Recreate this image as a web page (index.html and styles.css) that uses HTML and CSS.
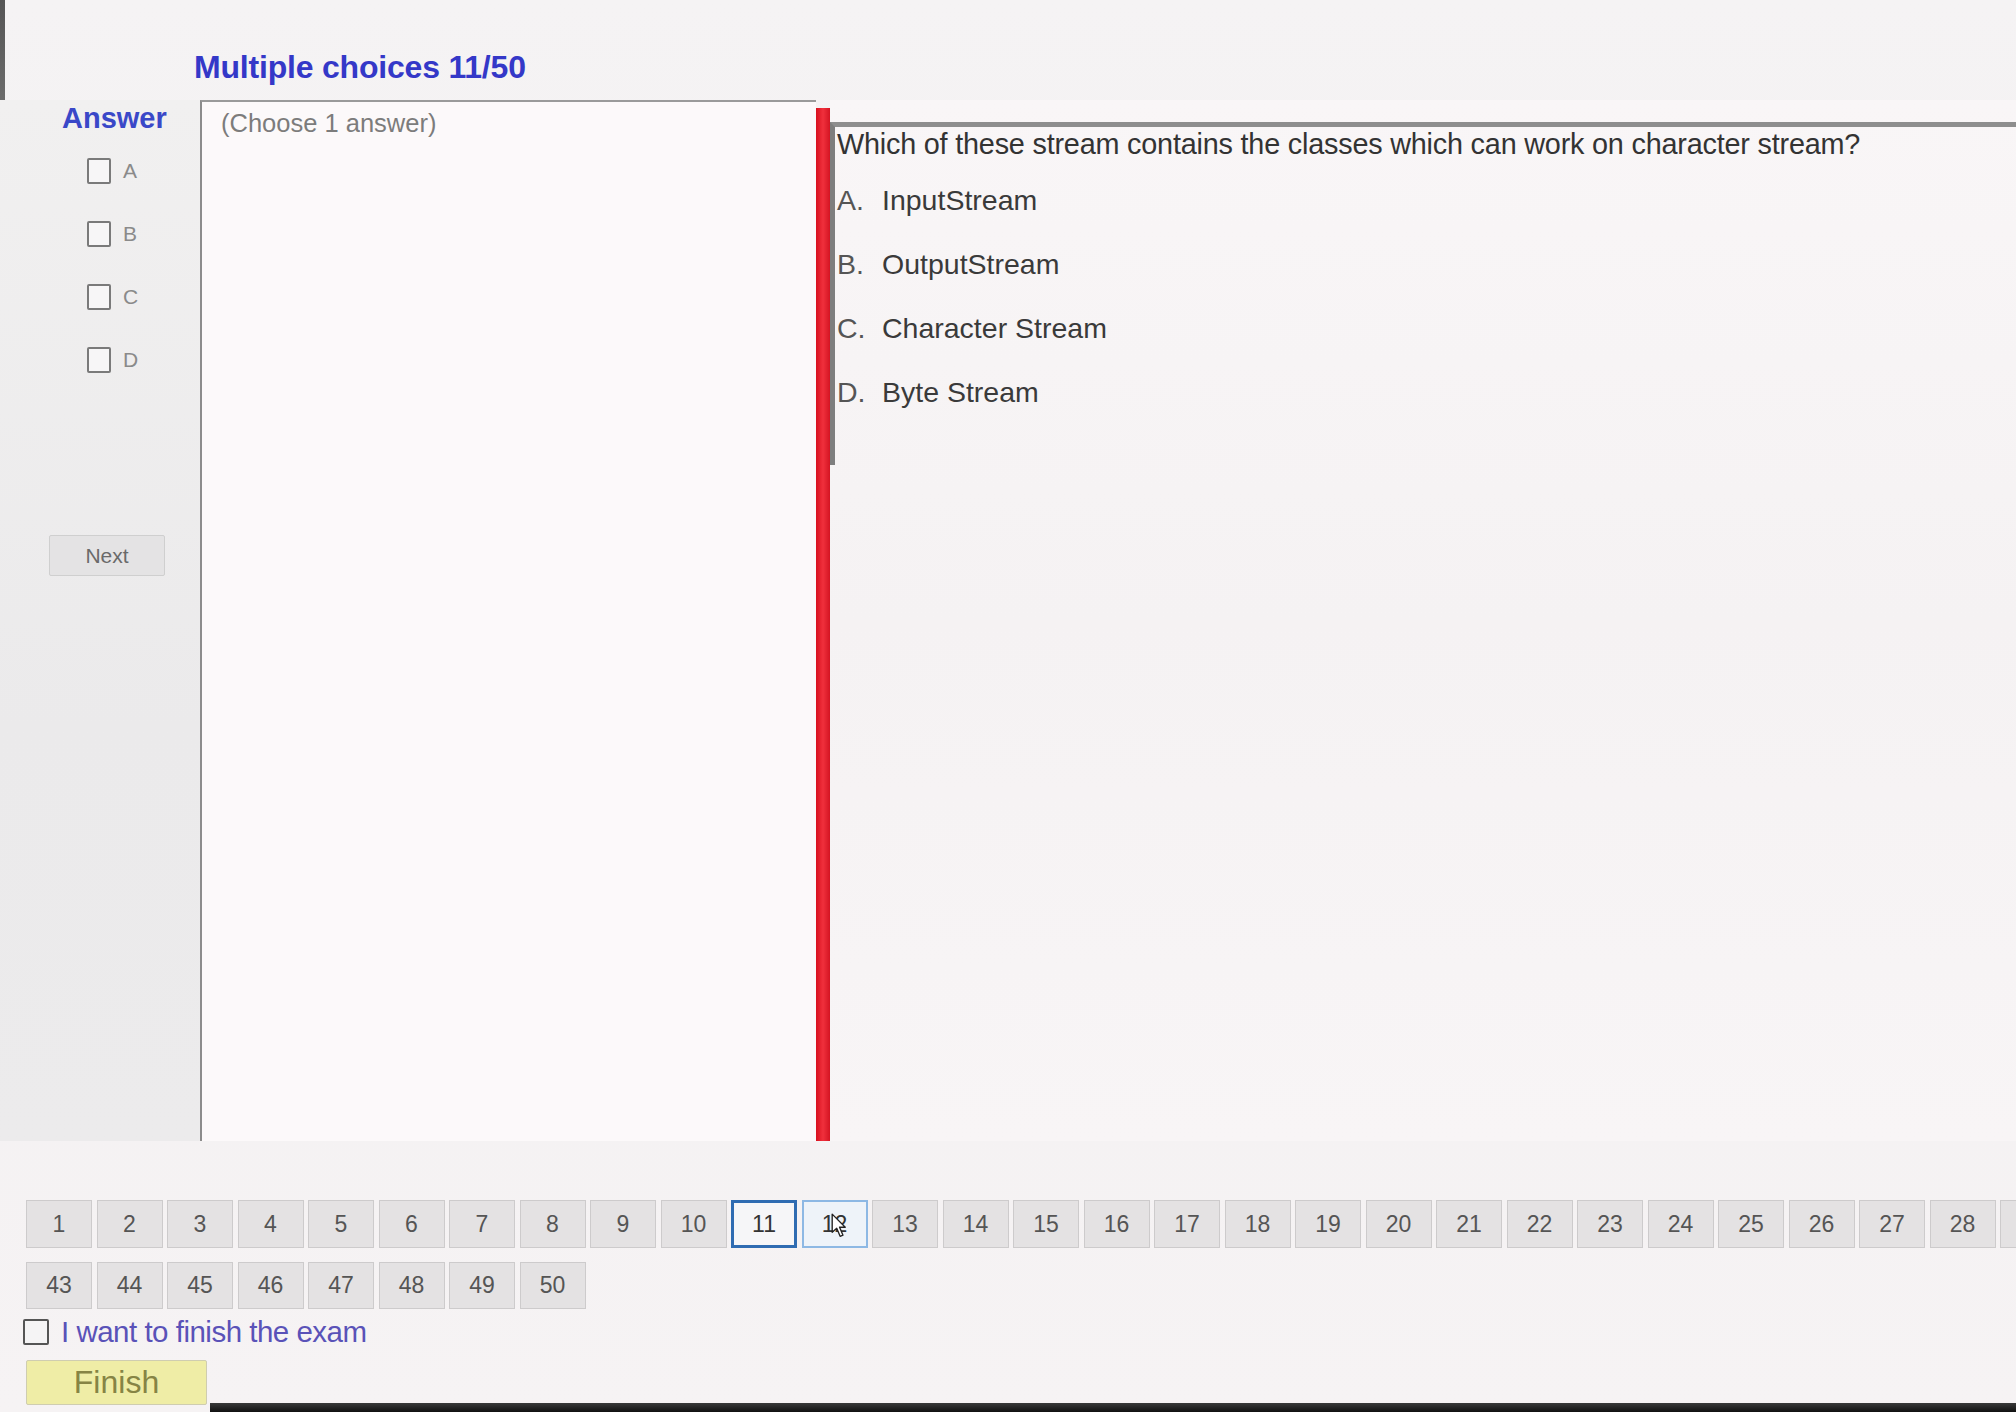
FILE: index.html
```html
<!DOCTYPE html>
<html lang="en">
<head>
<meta charset="utf-8">
<title>Multiple choices 11/50</title>
<link rel="stylesheet" href="styles.css">
</head>
<body>
<div class="screen">
  <header class="title">Multiple choices 11/50</header>
  <main class="exam">
    <aside class="answers">
      <div class="answers-label">Answer</div>
      <ul class="choices">
        <li class="choice"><span class="box"></span><span class="letter">A</span></li>
        <li class="choice"><span class="box"></span><span class="letter">B</span></li>
        <li class="choice"><span class="box"></span><span class="letter">C</span></li>
        <li class="choice"><span class="box"></span><span class="letter">D</span></li>
      </ul>
      <button class="next">Next</button>
    </aside>
    <section class="answer-box">(Choose 1 answer)</section>
    <div class="divider"></div>
    <section class="question">
      <div class="question-frame">
        <p class="q-text">Which of these stream contains the classes which can work on character stream?</p>
        <ul class="options">
          <li class="option"><span class="opt-key">A.</span>InputStream</li>
          <li class="option"><span class="opt-key">B.</span>OutputStream</li>
          <li class="option"><span class="opt-key">C.</span>Character Stream</li>
          <li class="option"><span class="opt-key">D.</span>Byte Stream</li>
        </ul>
      </div>
    </section>
  </main>
  <nav class="pager">
    <div class="pager-row">
      <span class="num">1</span><span class="num">2</span><span class="num">3</span><span class="num">4</span><span class="num">5</span><span class="num">6</span><span class="num">7</span><span class="num">8</span><span class="num">9</span><span class="num">10</span><span class="num current">11</span><span class="num hover">12<svg class="cursor" viewBox="0 0 14 22" width="16" height="25"><path d="M1 1 L1 17 L5 13.5 L8 20.5 L10.5 19.5 L7.5 12.5 L12.5 12.5 Z" fill="#fff" stroke="#222" stroke-width="1.2" stroke-linejoin="round"/></svg></span><span class="num">13</span><span class="num">14</span><span class="num">15</span><span class="num">16</span><span class="num">17</span><span class="num">18</span><span class="num">19</span><span class="num">20</span><span class="num">21</span><span class="num">22</span><span class="num">23</span><span class="num">24</span><span class="num">25</span><span class="num">26</span><span class="num">27</span><span class="num">28</span><span class="num">29</span>
    </div>
    <div class="pager-row second">
      <span class="num">43</span><span class="num">44</span><span class="num">45</span><span class="num">46</span><span class="num">47</span><span class="num">48</span><span class="num">49</span><span class="num">50</span>
    </div>
  </nav>
  <label class="finish-check"><span class="box big"></span><span class="finish-text">I want to finish the exam</span></label>
  <div class="finish-row">
    <button class="finish">Finish</button>
    <div class="bezel"></div>
  </div>
</div>
</body>
</html>
```
FILE: styles.css
```css
html, body {
  margin: 0;
  padding: 0;
}
body {
  width: 2016px;
  height: 1412px;
  overflow: hidden;
  background: #f1eff0;
  font-family: "Liberation Sans", Arial, sans-serif;
}
.screen {
  width: 2016px;
  height: 1412px;
  overflow: hidden;
  display: flex;
  flex-direction: column;
  background:
    linear-gradient(to bottom, #555 0, #9a9a9a 300px, rgba(220,220,220,0) 560px) left top / 5px 100% no-repeat,
    linear-gradient(to bottom, #f5f3f4, #f2f0f1 40%, #f6f3f4);
}
.title {
  margin: 48px 0 0 194px;
  font-size: 32px;
  line-height: 38px;
  font-weight: bold;
  color: #3438c8;
  letter-spacing: -0.2px;
}
.exam {
  margin-top: 14px;
  display: flex;
  height: 1041px;
}
.answers {
  width: 200px;
  flex: 0 0 200px;
  background: linear-gradient(to bottom, #f1f0f0, #ebeaeb 60%, #ecebec);
}
.answers-label {
  margin: 1px 0 0 62px;
  font-size: 29px;
  line-height: 34px;
  font-weight: bold;
  color: #3a48c8;
  letter-spacing: 0;
}
.choices {
  list-style: none;
  margin: 4px 0 0 87px;
  padding: 0;
}
.choice {
  height: 63px;
  display: flex;
  align-items: center;
  gap: 12px;
}
.box {
  width: 20px;
  height: 22px;
  border: 2px solid #7a7a7a;
  border-radius: 2px;
  background: #f7f6f7;
}
.letter {
  font-size: 21px;
  color: #8a8a8a;
}
.next {
  display: block;
  margin: 144px 0 0 49px;
  width: 116px;
  height: 41px;
  background: #e4e3e4;
  border: 1px solid #cfcfcf;
  border-radius: 2px;
  font-family: "Liberation Sans", Arial, sans-serif;
  font-size: 21px;
  color: #6a6a6a;
  padding: 0;
}
.answer-box {
  width: 616px;
  flex: 0 0 616px;
  border-left: 2px solid #8c8c8c;
  border-top: 2px solid #9a9a9a;
  background: #fcf9fa;
  padding: 6px 0 0 19px;
  box-sizing: border-box;
  font-size: 25.5px;
  line-height: 30px;
  color: #7c7c7c;
  letter-spacing: 0;
}
.divider {
  flex: 0 0 14px;
  margin-top: 8px;
  background: linear-gradient(to right, #d8101e, #f0303c 50%, #d41422);
}
.question {
  flex: 1;
  background: linear-gradient(to bottom, #f9f6f7, #f5f2f3 50%, #f8f5f6);
}
.question-frame {
  margin-top: 22px;
  height: 338px;
  border-top: 5px solid #8e8e8e;
  border-left: 5px solid #7e7e7e;
  padding-left: 2px;
  box-sizing: content-box;
}
.q-text {
  margin: 0;
  font-size: 28.8px;
  line-height: 34px;
  color: #333;
  white-space: nowrap;
  letter-spacing: -0.2px;
}
.options {
  list-style: none;
  margin: 7px 0 0 0;
  padding: 0;
}
.option {
  height: 64px;
  display: flex;
  align-items: center;
  font-size: 28.5px;
  color: #3a3a3a;
}
.opt-key {
  width: 45px;
  flex: 0 0 45px;
  color: #555;
}
.pager {
  margin-top: 59px;
  padding-left: 26px;
  display: flex;
  flex-direction: column;
  gap: 14px;
}
.pager-row {
  display: flex;
  gap: 4.5px;
  height: 48px;
}
.pager-row.second {
  height: 47px;
}
.num {
  flex: 0 0 66px;
  box-sizing: border-box;
  display: flex;
  align-items: center;
  justify-content: center;
  background: #e4e2e3;
  border: 1px solid #cdcbcc;
  font-size: 23px;
  color: #555;
  position: relative;
}
.num.current {
  background: #f6f6f8;
  border: 3px solid #2f6cb2;
  color: #333;
}
.num.hover {
  background: #eef3f9;
  border: 2px solid #8db8e4;
  color: #333;
}
.cursor {
  position: absolute;
  left: 27px;
  top: 11px;
}
.finish-check {
  margin: 9px 0 0 23px;
  display: flex;
  align-items: center;
  gap: 12px;
  height: 27px;
}
.box.big {
  width: 22px;
  height: 22px;
  border: 2px solid #555;
  background: #f5f4f5;
}
.finish-text {
  font-size: 29.5px;
  color: #5a52b8;
  letter-spacing: -0.5px;
}
.finish-row {
  margin-top: 15px;
  display: flex;
  height: 52px;
}
.finish {
  margin-left: 26px;
  width: 181px;
  height: 45px;
  background: #efeda6;
  border: 1px solid #cfcdb0;
  border-radius: 2px;
  font-family: "Liberation Sans", Arial, sans-serif;
  font-size: 32px;
  color: #868444;
  padding: 0;
}
.bezel {
  flex: 1;
  align-self: flex-end;
  height: 9px;
  margin-left: 3px;
  background: linear-gradient(to bottom, #3a3a3a, #111);
}
```
